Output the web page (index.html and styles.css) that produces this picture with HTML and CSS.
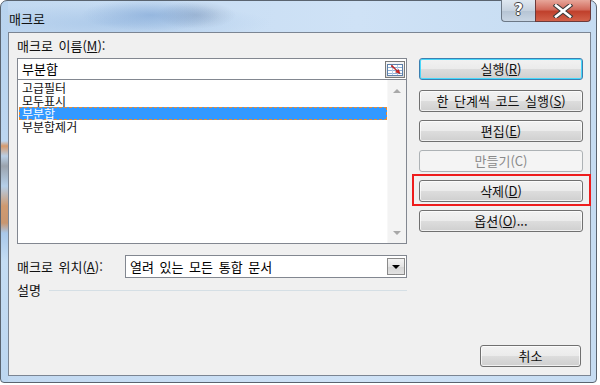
FILE: index.html
```html
<!DOCTYPE html>
<html lang="ko">
<head>
    <meta charset="UTF-8">
    <title>매크로</title>
    <link rel="stylesheet" href="styles.css">
</head>
<body>
    <div class="window">
        <div class="titlebar">
            <span class="title">매크로</span>
            <div class="caption">
                <div class="cap-help">?</div>
                <div class="cap-close">
                    <svg width="22" height="14" viewBox="0 0 22 14">
                        <path d="M4 1.5 L18 12.5 M18 1.5 L4 12.5" stroke="#3a3a3a" stroke-width="4.6" stroke-linecap="square"/>
                        <path d="M4 1.5 L18 12.5 M18 1.5 L4 12.5" stroke="#ffffff" stroke-width="2.6" stroke-linecap="square"/>
                    </svg>
                </div>
            </div>
        </div>

        <div class="client">
            <div class="main">
                <div class="left">
                    <div class="label">매크로 이름(<u>M</u>):</div>
                    <div class="name-box">
                        <span>부분합</span>
                        <div class="ref-btn">
                            <svg width="16" height="12" viewBox="0 0 16 12">
                                <rect x="0.5" y="0.5" width="15" height="11" fill="#ffffff" stroke="#5d7fa8"/>
                                <path d="M1 3.5 H15 M1 6.5 H15 M1 9.5 H15" stroke="#8fb0d6"/>
                                <path d="M5.5 1 V11 M10.5 1 V11" stroke="#b9cde4"/>
                                <path d="M4 2 L10 7 L8.5 8 L13 9.5 L11.5 5.5 L10.5 6.8 L5 1.2 Z" fill="#e02020" stroke="#9a1010" stroke-width="0.6"/>
                            </svg>
                        </div>
                    </div>
                    <div class="listbox">
                        <div class="items">
                            <div class="item">고급필터</div>
                            <div class="item">모두표시</div>
                            <div class="item selected">부분합</div>
                            <div class="item">부분합제거</div>
                        </div>
                        <div class="scrollbar">
                            <div class="arrow up"></div>
                            <div class="arrow down"></div>
                        </div>
                    </div>
                    <div class="location">
                        <span class="label">매크로 위치(<u>A</u>):</span>
                        <div class="combo">
                            <span>열려 있는 모든 통합 문서</span>
                            <div class="drop"><div class="tri"></div></div>
                        </div>
                    </div>
                    <div class="desc">
                        <span>설명</span>
                        <div class="rule"></div>
                    </div>
                </div>

                <div class="right">
                    <div class="btn default">실행(<u>R</u>)</div>
                    <div class="btn">한 단계씩 코드 실행(<u>S</u>)</div>
                    <div class="btn">편집(<u>E</u>)</div>
                    <div class="btn disabled">만들기(C)</div>
                    <div class="btn marked">삭제(<u>D</u>)</div>
                    <div class="btn">옵션(<u>O</u>)...</div>
                </div>
            </div>
            <div class="footer">
                <div class="btn cancel">취소</div>
            </div>
        </div>
    </div>
</body>
</html>
```

FILE: styles.css
```css
body {
    margin: 0;
    padding: 0;
    background-color: #ffffff;
    font-family: "Noto Sans CJK KR", "Noto Sans", sans-serif;
    font-size: 13px;
    word-spacing: 2px;
    color: #000;
}
u {
    text-decoration: underline;
    text-underline-offset: 1px;
}
.window {
    width: 597px;
    height: 383px;
    box-sizing: border-box;
    padding: 0 5px 6px 7px;
    display: flex;
    flex-direction: column;
    border: 1px solid #5a6470;
    border-radius: 7px 7px 4px 4px;
    background:
        linear-gradient(to bottom, #b8d3ee 0px, #bcd6f0 140px, #d69a6c 145px, #b9cfe6 155px, #9ba3ad 165px, #b5cfe9 185px, #cf9a70 205px, #c89670 222px, #a9c8ea 232px, #c4dcf3 260px, #bcd6f0 383px) left / 7px 100% no-repeat,
        radial-gradient(ellipse 70px 16px at 150px 14px, rgba(120,160,210,0.55), rgba(120,160,210,0) 100%),
        radial-gradient(ellipse 40px 14px at 195px 14px, rgba(110,130,160,0.35), rgba(110,130,160,0) 100%),
        radial-gradient(ellipse 160px 20px at 110px 22px, rgba(150,185,225,0.5), rgba(150,185,225,0) 100%),
        linear-gradient(to right, #c2d9f1, #cfe2f6 60%, #c6dcf2);
}
.titlebar {
    height: 31px;
    display: flex;
    justify-content: space-between;
    align-items: flex-start;
}
.title {
    margin: 10px 0 0 1px;
    font-size: 13px;
    line-height: 16px;
    color: #111;
}
.caption {
    display: flex;
    margin-top: -1px;
}
.cap-help {
    width: 34px;
    height: 22px;
    box-sizing: border-box;
    border: 1px solid #6c7886;
    border-top: none;
    border-right: none;
    border-radius: 0 0 0 4px;
    background: linear-gradient(to bottom, #dfe8f1, #c6d2df 50%, #b5c3d3 51%, #c9d6e4);
    color: #fff;
    font-family: "DejaVu Sans", sans-serif;
    font-weight: bold;
    font-size: 15px;
    line-height: 21px;
    text-align: center;
    text-shadow: -1px 0 #444, 1px 0 #444, 0 -1px #444, 0 1px #444;
}
.cap-close {
    width: 56px;
    height: 22px;
    box-sizing: border-box;
    border: 1px solid #6c3a3a;
    border-top: none;
    border-radius: 0 0 4px 0;
    background: linear-gradient(to bottom, #e7a69a, #d26b5c 45%, #c0402c 55%, #d2614a);
    display: flex;
    align-items: center;
    justify-content: center;
}
.client {
    flex: 1;
    border: 1px solid #7b8593;
    background-color: #f0f0f0;
    display: flex;
    flex-direction: column;
}
.main {
    flex: 1;
    display: flex;
    padding: 6px 0 0 8px;
}
.left {
    width: 390px;
}
.label {
    line-height: 14px;
    height: 14px;
    color: #111;
}
.name-box {
    margin-top: 5px;
    height: 21px;
    box-sizing: border-box;
    border: 1px solid #828790;
    border-bottom: none;
    background-color: #fff;
    display: flex;
    align-items: center;
    justify-content: space-between;
    padding-left: 4px;
    line-height: 14px;
}
.ref-btn {
    width: 20px;
    height: 17px;
    margin: 1px 1px 0 0;
    box-sizing: border-box;
    border: 1px solid #7a7a7a;
    background: linear-gradient(to bottom, #f6f6f6, #dcdcdc);
    display: flex;
    align-items: center;
    justify-content: center;
}
.listbox {
    height: 165px;
    box-sizing: border-box;
    border: 1px solid #828790;
    background-color: #fff;
    display: flex;
}
.items {
    flex: 1;
    padding: 1px 0 0 1px;
}
.item {
    height: 13px;
    line-height: 13px;
    font-size: 12px;
    padding-left: 3px;
    box-sizing: border-box;
    color: #111;
}
.item.selected {
    background-color: #3399ff;
    color: #fff;
    border: 1px dashed #e88a30;
    padding-left: 2px;
    line-height: 11px;
}
.scrollbar {
    width: 18px;
    background-color: #f3f3f3;
    border-left: 1px solid #f8f8f8;
    display: flex;
    flex-direction: column;
    justify-content: space-between;
    align-items: center;
    padding: 9px 0 8px;
}
.arrow {
    width: 0;
    height: 0;
    border-left: 4px solid transparent;
    border-right: 4px solid transparent;
}
.arrow.up {
    border-bottom: 4px solid #a8a8a8;
}
.arrow.down {
    border-top: 4px solid #a8a8a8;
}
.location {
    margin-top: 11px;
    display: flex;
    align-items: center;
    justify-content: space-between;
}
.combo {
    width: 282px;
    height: 23px;
    box-sizing: border-box;
    border: 1px solid #828790;
    background-color: #fff;
    display: flex;
    align-items: center;
    justify-content: space-between;
    padding-left: 4px;
    line-height: 14px;
}
.drop {
    width: 18px;
    height: 17px;
    margin-right: 1px;
    box-sizing: border-box;
    border: 1px solid #8a8a8a;
    background: linear-gradient(to bottom, #f4f4f4, #e4e4e4 50%, #d4d4d4 51%, #e2e2e2);
    display: flex;
    align-items: center;
    justify-content: center;
}
.tri {
    width: 0;
    height: 0;
    border-left: 4px solid transparent;
    border-right: 4px solid transparent;
    border-top: 4px solid #000;
}
.desc {
    margin-top: 5px;
    display: flex;
    align-items: center;
    line-height: 14px;
    color: #111;
}
.rule {
    flex: 1;
    height: 1px;
    margin-left: 8px;
    background-color: #d5dfe5;
}
.right {
    width: 164px;
    margin-left: 12px;
    padding-top: 19px;
    display: flex;
    flex-direction: column;
    gap: 8px;
}
.btn {
    height: 22px;
    box-sizing: border-box;
    border: 1px solid #707070;
    border-radius: 3px;
    background: linear-gradient(to bottom, #f2f2f2 0%, #ebebeb 48%, #dddddd 50%, #cfcfcf 100%);
    box-shadow: inset 0 0 0 1px rgba(255,255,255,0.7);
    text-align: center;
    line-height: 19px;
    color: #111;
}
.btn.default {
    border-color: #3c7fb1;
    box-shadow: inset 0 0 0 1px #48d8fb;
    margin-bottom: 2px;
}
.btn.disabled {
    border-color: #adb2b5;
    background: #f4f4f4;
    box-shadow: none;
    color: #8a8a8a;
}
.btn.marked {
    position: relative;
}
.btn.marked::after {
    content: "";
    position: absolute;
    left: -8px;
    right: -9px;
    top: -7px;
    bottom: -5px;
    border: 2px solid #ee1c1c;
}
.footer {
    display: flex;
    justify-content: flex-end;
    padding: 0 9px 8px 0;
}
.btn.cancel {
    width: 101px;
}
```
